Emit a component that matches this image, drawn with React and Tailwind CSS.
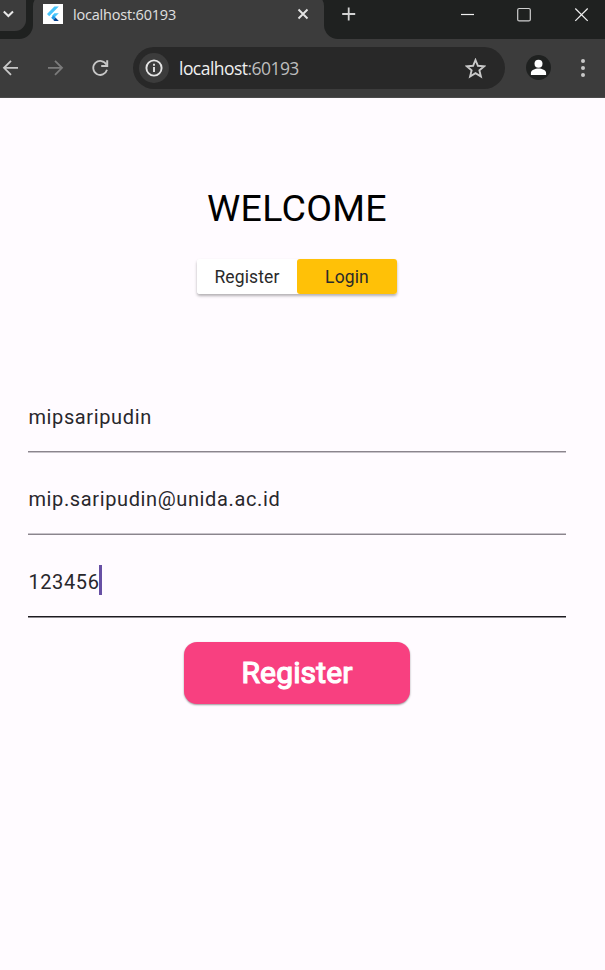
function FlutterLogo() {
  return (
    <svg width="20" height="20" viewBox="0 0 20 20" className="shrink-0 bg-white">
      <path d="M4 10 11.4 2.6H15.8L6.2 12.2Z" fill="#47c5fb" />
      <path d="M11.4 9.3H15.8L11 14.1 8.8 11.9Z" fill="#47c5fb" />
      <path d="M8.2 13.7 10.4 11.5 12.8 13.8 10.4 16Z" fill="#1f9bea" />
      <path d="M10.4 16 12.7 13.8 15.8 17H11.4Z" fill="#063f8c" />
    </svg>
  );
}

function TabStrip() {
  return (
    <div className="flex h-[39px] shrink-0 overflow-hidden bg-[#3c3c3c]">
      <div className="h-[39px] w-[33px] shrink-0 rounded-br-[14px] bg-[#1f2120]">
        <div className="flex h-[31px] w-[26px] rounded-br-[11px] bg-[#3c3c3c]">
          <svg width="18" height="28" viewBox="0 0 18 28" fill="none" stroke="#e8e8e8" strokeWidth="2">
            <path d="m3.8 11.5 4.6 4.5 4.6-4.5" />
          </svg>
        </div>
      </div>
      <div className="h-[12px] w-[290.5px] shrink-0 bg-[#1f2120]">
        <div className="-mt-[6px] flex h-[45px] items-center rounded-t-[12px] bg-[#3c3c3c] pb-[5px] pl-[10px]">
          <FlutterLogo />
          <span className="mt-[2px] ml-[10px] w-[180px] text-[14.5px] leading-5 tracking-[-0.2px] whitespace-nowrap text-[#e0e0e0]">localhost:60193</span>
          <svg className="ml-[43px] shrink-0" width="16" height="16" viewBox="0 0 16 16" stroke="#e4e4e4" strokeWidth="1.9">
            <path d="m2.5 3.5 9 9m0-9-9 9" />
          </svg>
        </div>
      </div>
      <div className="flex h-[39px] flex-1 rounded-bl-[14px] bg-[#1f2120]">
        <svg className="ml-[17.5px]" width="16" height="28" viewBox="0 0 16 28" stroke="#d2d2d2" strokeWidth="1.8">
          <path d="M1.2 14h13M7.7 7.5v13" />
        </svg>
        <svg className="ml-auto" width="150" height="30" viewBox="0 0 150 30" fill="none" stroke="#f0f0f0">
          <path d="M6 14.5h13" strokeWidth="1.2" />
          <rect x="62.7" y="8.5" width="12.6" height="12.4" rx="1.5" strokeWidth="1.2" stroke="#cfcfcf" />
          <path d="m120.3 8.5 12.4 12.4m0-12.4-12.4 12.4" strokeWidth="1.2" />
        </svg>
      </div>
    </div>
  );
}

function Toolbar() {
  return (
    <div className="flex h-[59px] shrink-0 items-center border-b border-[#4a4a4a] bg-[#3c3c3c]">
      <svg width="133" height="30" viewBox="0 0 133 30" fill="none" strokeWidth="1.8" className="shrink-0">
        <path d="M18 14.8H4.5M11 7.8 4 14.8l7 7" stroke="#c8c8c8" />
        <path d="M48 14.8h13.5M55 7.8l7 7-7 7" stroke="#7b7b7b" />
        <path d="M106.4 11.6a7 7 0 1 0 .6 5.2" stroke="#c8c8c8" />
        <path d="M107.2 7.3v5.7h-6" stroke="#c8c8c8" strokeWidth="2" />
      </svg>
      <div className="flex h-[42px] w-[372px] shrink-0 items-center rounded-full bg-[#282828] pl-[6px]">
        <div className="flex size-[30px] items-center justify-center rounded-full bg-[#3c3c3c]">
          <svg width="18" height="18" viewBox="0 0 18 18" fill="none" stroke="#e4e4e4" strokeWidth="1.9">
            <circle cx="9" cy="9" r="7.6" />
            <path d="M9 8v5M9 4.8v1.9" />
          </svg>
        </div>
        <span className="-mt-px ml-[10px] text-[17.5px] leading-6 tracking-[-0.54px] whitespace-nowrap text-[#f0f0f0]">
          localhost<span className="text-[#bdbdbd]">:60193</span>
        </span>
        <svg className="mr-[19px] ml-auto" width="21" height="21" viewBox="0 0 21 21" fill="none" stroke="#c8c8c8" strokeWidth="1.9">
          <path d="m10.5 2 2.4 5.8 6.2.5-4.7 4.1 1.5 6.1-5.4-3.3-5.4 3.3 1.5-6.1-4.7-4.1 6.2-.5Z" />
        </svg>
      </div>
      <svg className="mb-px ml-[21px] shrink-0" width="25" height="25" viewBox="0 0 25 25">
        <circle cx="12.5" cy="12.5" r="12.5" fill="#1f2120" />
        <circle cx="12.5" cy="8.7" r="4" fill="#fff" />
        <path d="M4.9 20v-1.9c0-3 4.2-4.6 7.6-4.6s7.6 1.6 7.6 4.6V20Z" fill="#fff" />
      </svg>
      <svg className="ml-[29px] shrink-0" width="6" height="20" viewBox="0 0 6 20" fill="#c8c8c8">
        <circle cx="3" cy="3" r="2" />
        <circle cx="3" cy="10" r="2" />
        <circle cx="3" cy="17" r="2" />
      </svg>
    </div>
  );
}

function Field({ value, className, focused }) {
  return (
    <div className={"flex w-[538px] items-center text-[20px] leading-[30px] tracking-[0.625px] text-[#29272c] " + className}>
      <span className={focused ? "pt-[3px] pl-[0.4px] leading-[30px]" : "pl-[0.4px]"}>{value}</span>
      {focused && <span className="-mt-px -ml-[0.6px] h-[30px] w-[2.5px] bg-[#6750a4]" />}
    </div>
  );
}

function Rule({ top, bottom }) {
  return (
    <div className="w-[538px]">
      <div className={"h-px " + top} />
      <div className={"h-px " + bottom} />
    </div>
  );
}

export default function App() {
  return (
    <div className="flex h-[970px] w-[605px] flex-col overflow-hidden bg-[#fffbff] font-['Open_Sans',sans-serif]">
      <TabStrip />
      <Toolbar />
      <main className="flex flex-1 flex-col items-start pl-7 font-[Roboto,sans-serif]">
        <div className="flex w-[538px] flex-col items-center">
          <h1 className="mt-[88px] text-[37.5px] leading-[44px] tracking-[0.3px] text-black">WELCOME</h1>
          <div className="mt-[29px] flex h-[35px] w-[200px] rounded-[3px] text-[17.5px] leading-[37px] tracking-[0.14px] text-[#2a2a2a] shadow-[0_2px_3px_rgba(0,0,0,0.3)]">
            <div className="h-[35px] w-[100px] rounded-[3px] bg-white text-center">Register</div>
            <div className="h-[35px] w-[100px] rounded-[3px] bg-[#ffc107] text-center">Login</div>
          </div>
        </div>
        <Field className="mt-[108px]" value="mipsaripudin" />
        <div className="mt-[19px]"><Rule top="bg-[#8b858d]" bottom="bg-[#c8c3ca]" /></div>
        <Field className="mt-[31px]" value="mip.saripudin@unida.ac.id" />
        <div className="mt-[19px]"><Rule top="bg-[#c8c3ca]" bottom="bg-[#8b858d]" /></div>
        <Field className="mt-[30px] h-[30px]" value="123456" focused />
        <div className="mt-[21px]"><Rule top="bg-[#1d1b20]" bottom="bg-[#8e8b90]" /></div>
        <div className="flex w-[538px] justify-center">
          <button className="mt-6 h-[62px] w-[225.4px] rounded-[13px] bg-[#f84080] text-[30px] leading-[62px] tracking-[0.15px] text-white shadow-[0_1px_2px_rgba(0,0,0,0.4)] [-webkit-text-stroke:1.2px_white]">
            Register
          </button>
        </div>
      </main>
    </div>
  );
}
